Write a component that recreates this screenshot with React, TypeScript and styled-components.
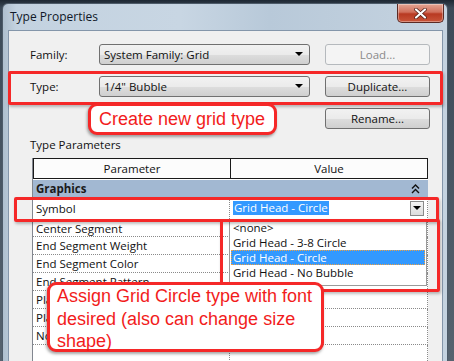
import React from "react";
import styled, { createGlobalStyle } from "styled-components";

const GlobalStyle = createGlobalStyle`
  html, body { margin: 0; padding: 0; }
  body {
    width: 454px;
    height: 361px;
    overflow: hidden;
    background: #2f3a46;
    font-family: "Segoe UI", "Open Sans", "DejaVu Sans", sans-serif;
  }
`;

const Stage = styled.div`
  position: relative;
  width: 454px;
  height: 361px;
  overflow: hidden;
  padding-top: 3px;
  box-sizing: border-box;
  background: linear-gradient(180deg, #1e2833 0, #3c4a58 8px, #56636f 100%);
`;

const Win = styled.div`
  margin-left: 2px;
  width: 446px;
  height: 400px;
  box-sizing: border-box;
  border: 1px solid #4d5b69;
  border-radius: 6px 6px 0 0;
  background: linear-gradient(90deg, #aebfce 0, #c3d2e0 3%, #c8d6e3 40%, #b8c9d9 60%, #c5d3e0 100%);
  display: flex;
  flex-direction: column;
`;

const TitleBar = styled.div`
  height: 26px;
  display: flex;
  align-items: flex-start;
  justify-content: space-between;
  padding-left: 7px;
  padding-right: 3px;
`;

const Title = styled.span`
  font-size: 12px;
  line-height: 26px;
  color: #101828;
`;

const CloseBtn = styled.div`
  width: 47px;
  height: 19px;
  box-sizing: border-box;
  border: 1px solid #5a2a24;
  border-top: none;
  border-radius: 0 0 5px 5px;
  background: linear-gradient(180deg, #e3a593 0, #d1705c 45%, #b83a22 55%, #c9553a 100%);
  display: flex;
  align-items: center;
  justify-content: center;
  box-shadow: inset 0 0 0 1px rgba(255, 255, 255, 0.35);
`;

const Client = styled.div`
  flex: 1;
  margin: 0 4px 0 5px;
  border: 1px solid #8496aa;
  background: #f0f0f0;
  padding: 12px 12px 0 21px;
  display: flex;
  flex-direction: column;
  font-size: 11.5px;
`;

const FormRow = styled.div<{ $mt?: number }>`
  display: grid;
  grid-template-columns: 69px 211px 120px;
  align-items: center;
  height: 22px;
  margin-top: ${(p) => p.$mt ?? 0}px;
`;

const Label = styled.span`
  color: #111;
`;

const Combo = styled.div`
  height: 21px;
  box-sizing: border-box;
  border: 1px solid #707070;
  border-radius: 3px;
  background: linear-gradient(180deg, #f2f2f2 0, #ebebeb 50%, #dddddd 51%, #cfcfcf 100%);
  display: flex;
  align-items: center;
  justify-content: space-between;
  padding: 0 6px 0 4px;
  color: #111;
`;

const Arrow = styled.span`
  width: 0;
  height: 0;
  border-left: 4px solid transparent;
  border-right: 4px solid transparent;
  border-top: 4px solid #000;
`;

const Button = styled.div<{ $disabled?: boolean }>`
  grid-column: 3;
  margin-left: 15px;
  height: 21px;
  box-sizing: border-box;
  border: 1px solid ${(p) => (p.$disabled ? "#b5b9bd" : "#707070")};
  border-radius: 3px;
  background: ${(p) =>
    p.$disabled
      ? "#f4f4f4"
      : "linear-gradient(180deg, #f2f2f2 0, #ebebeb 50%, #dddddd 51%, #cfcfcf 100%)"};
  display: flex;
  align-items: center;
  justify-content: center;
  color: ${(p) => (p.$disabled ? "#8a8a8a" : "#111")};
`;

const SectionLabel = styled.div`
  margin-top: 8px;
  color: #111;
  line-height: 16px;
`;

const Table = styled.div`
  margin: 5px 0 0 2px;
  width: 395px;
  flex: 1;
  background: #fff;
  border-left: 1px solid #828790;
  display: flex;
  flex-direction: column;
`;

const HeaderRow = styled.div`
  display: grid;
  grid-template-columns: 197px 1fr;
  height: 21px;
  box-sizing: border-box;
  border: 1px solid #1a1a1a;
  background: #fcfcfc;
`;

const HeaderCell = styled.div<{ $last?: boolean }>`
  display: flex;
  align-items: center;
  justify-content: center;
  color: #111;
  border-right: ${(p) => (p.$last ? "none" : "1px solid #1a1a1a")};
`;

const GroupRow = styled.div`
  height: 17px;
  margin-top: 1px;
  background: #a2b8d2;
  display: flex;
  align-items: center;
  justify-content: space-between;
  padding: 0 8px 0 3px;
  font-weight: bold;
  color: #1a1a1a;
`;

const Row = styled.div<{ $h?: number }>`
  display: grid;
  grid-template-columns: 197px 1fr;
  height: ${(p) => p.$h ?? 18}px;
  box-sizing: border-box;
  border-bottom: 1px dotted #8a8a8a;
  border-right: 1px dotted #8a8a8a;
`;

const Cell = styled.div<{ $first?: boolean }>`
  display: flex;
  align-items: center;
  padding-left: ${(p) => (p.$first ? 3 : 2)}px;
  color: #111;
  white-space: nowrap;
  overflow: hidden;
  border-right: ${(p) => (p.$first ? "1px dotted #8a8a8a" : "none")};
`;

const ValueCell = styled.div`
  display: flex;
  align-items: center;
  justify-content: space-between;
  padding: 0 3px 0 3px;
`;

const SelText = styled.span`
  background: #3399ff;
  color: #fff;
  line-height: 14px;
  padding: 0 1px;
`;

const DropBtn = styled.div`
  width: 14px;
  height: 15px;
  box-sizing: border-box;
  border: 1px solid #8a8a8a;
  background: linear-gradient(180deg, #f4f4f4 0, #dcdcdc 100%);
  display: flex;
  align-items: center;
  justify-content: center;
`;

const ListBox = styled.div`
  position: absolute;
  left: 229px;
  top: 220px;
  width: 198px;
  height: 66px;
  box-sizing: border-box;
  background: #fff;
  border: 1px solid #9a9a9a;
  border-top: none;
  padding: 0 1px;
  display: flex;
  flex-direction: column;
  font-size: 11.5px;
`;

const ListItem = styled.div<{ $sel?: boolean }>`
  height: 15px;
  line-height: 15px;
  padding-left: 2px;
  box-sizing: border-box;
  color: ${(p) => (p.$sel ? "#fff" : "#111")};
  background: ${(p) => (p.$sel ? "#3399ff" : "transparent")};
  outline: ${(p) => (p.$sel ? "1px dotted #f0a040" : "none")};
  outline-offset: -1px;
`;

const RedBox = styled.div`
  position: absolute;
  box-sizing: border-box;
  border: 3px solid #f52828;
  border-radius: 2px;
  box-shadow: 1px 2px 3px rgba(0, 0, 0, 0.25);
`;

const Callout = styled.div`
  position: absolute;
  box-sizing: border-box;
  border: 3px solid #f52828;
  border-radius: 9px;
  background: #fff;
  box-shadow: -1px 2px 3px rgba(0, 0, 0, 0.35);
  color: #f21c1c;
  font-family: "Liberation Sans", Arial, sans-serif;
  font-size: 18px;
  line-height: 22.5px;
`;

const rows = [
  "End Segment Weight",
  "End Segment Color",
  "End Segment Pattern",
  "Plan View Symbols End 1 (Default)",
  "Plan View Symbols End 2 (Default)",
  "Non-Plan View Symbols (Default)",
  "",
];

export default function App() {
  return (
    <>
      <GlobalStyle />
      <Stage>
        <Win>
          <TitleBar>
            <Title>Type Properties</Title>
            <CloseBtn>
              <svg width="13" height="11" viewBox="0 0 13 11">
                <path
                  d="M2 1.5 L11 9.5 M11 1.5 L2 9.5"
                  stroke="#4a1a12"
                  strokeWidth="3.6"
                  strokeLinecap="round"
                />
                <path
                  d="M2 1.5 L11 9.5 M11 1.5 L2 9.5"
                  stroke="#fff"
                  strokeWidth="2.2"
                  strokeLinecap="round"
                />
              </svg>
            </CloseBtn>
          </TitleBar>
          <Client>
            <FormRow>
              <Label>Family:</Label>
              <Combo>
                System Family: Grid
                <Arrow />
              </Combo>
              <Button $disabled>Load...</Button>
            </FormRow>
            <FormRow $mt={10}>
              <Label>Type:</Label>
              <Combo>
                1/4" Bubble
                <Arrow />
              </Combo>
              <Button>Duplicate...</Button>
            </FormRow>
            <FormRow $mt={10}>
              <Button>Rename...</Button>
            </FormRow>
            <SectionLabel>Type Parameters</SectionLabel>
            <Table>
              <HeaderRow>
                <HeaderCell>Parameter</HeaderCell>
                <HeaderCell $last>Value</HeaderCell>
              </HeaderRow>
              <GroupRow>
                Graphics
                <svg width="9" height="10" viewBox="0 0 9 10">
                  <path
                    d="M1 4.5 L4.5 1 L8 4.5 M1 9 L4.5 5.5 L8 9"
                    stroke="#111"
                    strokeWidth="1.4"
                    fill="none"
                  />
                </svg>
              </GroupRow>
              <Row $h={23}>
                <Cell $first>Symbol</Cell>
                <ValueCell>
                  <SelText>Grid Head - Circle</SelText>
                  <DropBtn>
                    <Arrow />
                  </DropBtn>
                </ValueCell>
              </Row>
              <Row $h={17}>
                <Cell $first>Center Segment</Cell>
                <Cell />
              </Row>
              {rows.map((r, i) => (
                <Row key={i}>
                  <Cell $first>{r}</Cell>
                  <Cell />
                </Row>
              ))}
            </Table>
          </Client>
        </Win>

        <ListBox>
          <ListItem>&lt;none&gt;</ListItem>
          <ListItem>Grid Head - 3-8 Circle</ListItem>
          <ListItem $sel>Grid Head - Circle</ListItem>
          <ListItem>Grid Head - No Bubble</ListItem>
        </ListBox>

        <RedBox style={{ left: 8, top: 71, width: 435, height: 34 }} />
        <RedBox style={{ left: 14, top: 197, width: 425, height: 25 }} />
        <RedBox style={{ left: 220, top: 219, width: 220, height: 73 }} />

        <Callout
          style={{ left: 88, top: 103, width: 189, height: 32, padding: "2px 0 0 8px" }}
        >
          Create new grid type
        </Callout>
        <Callout
          style={{ left: 47, top: 282, width: 277, height: 70, padding: "0 6px 0 7px" }}
        >
          Assign Grid Circle type with font desired (also can change size shape)
        </Callout>
      </Stage>
    </>
  );
}
